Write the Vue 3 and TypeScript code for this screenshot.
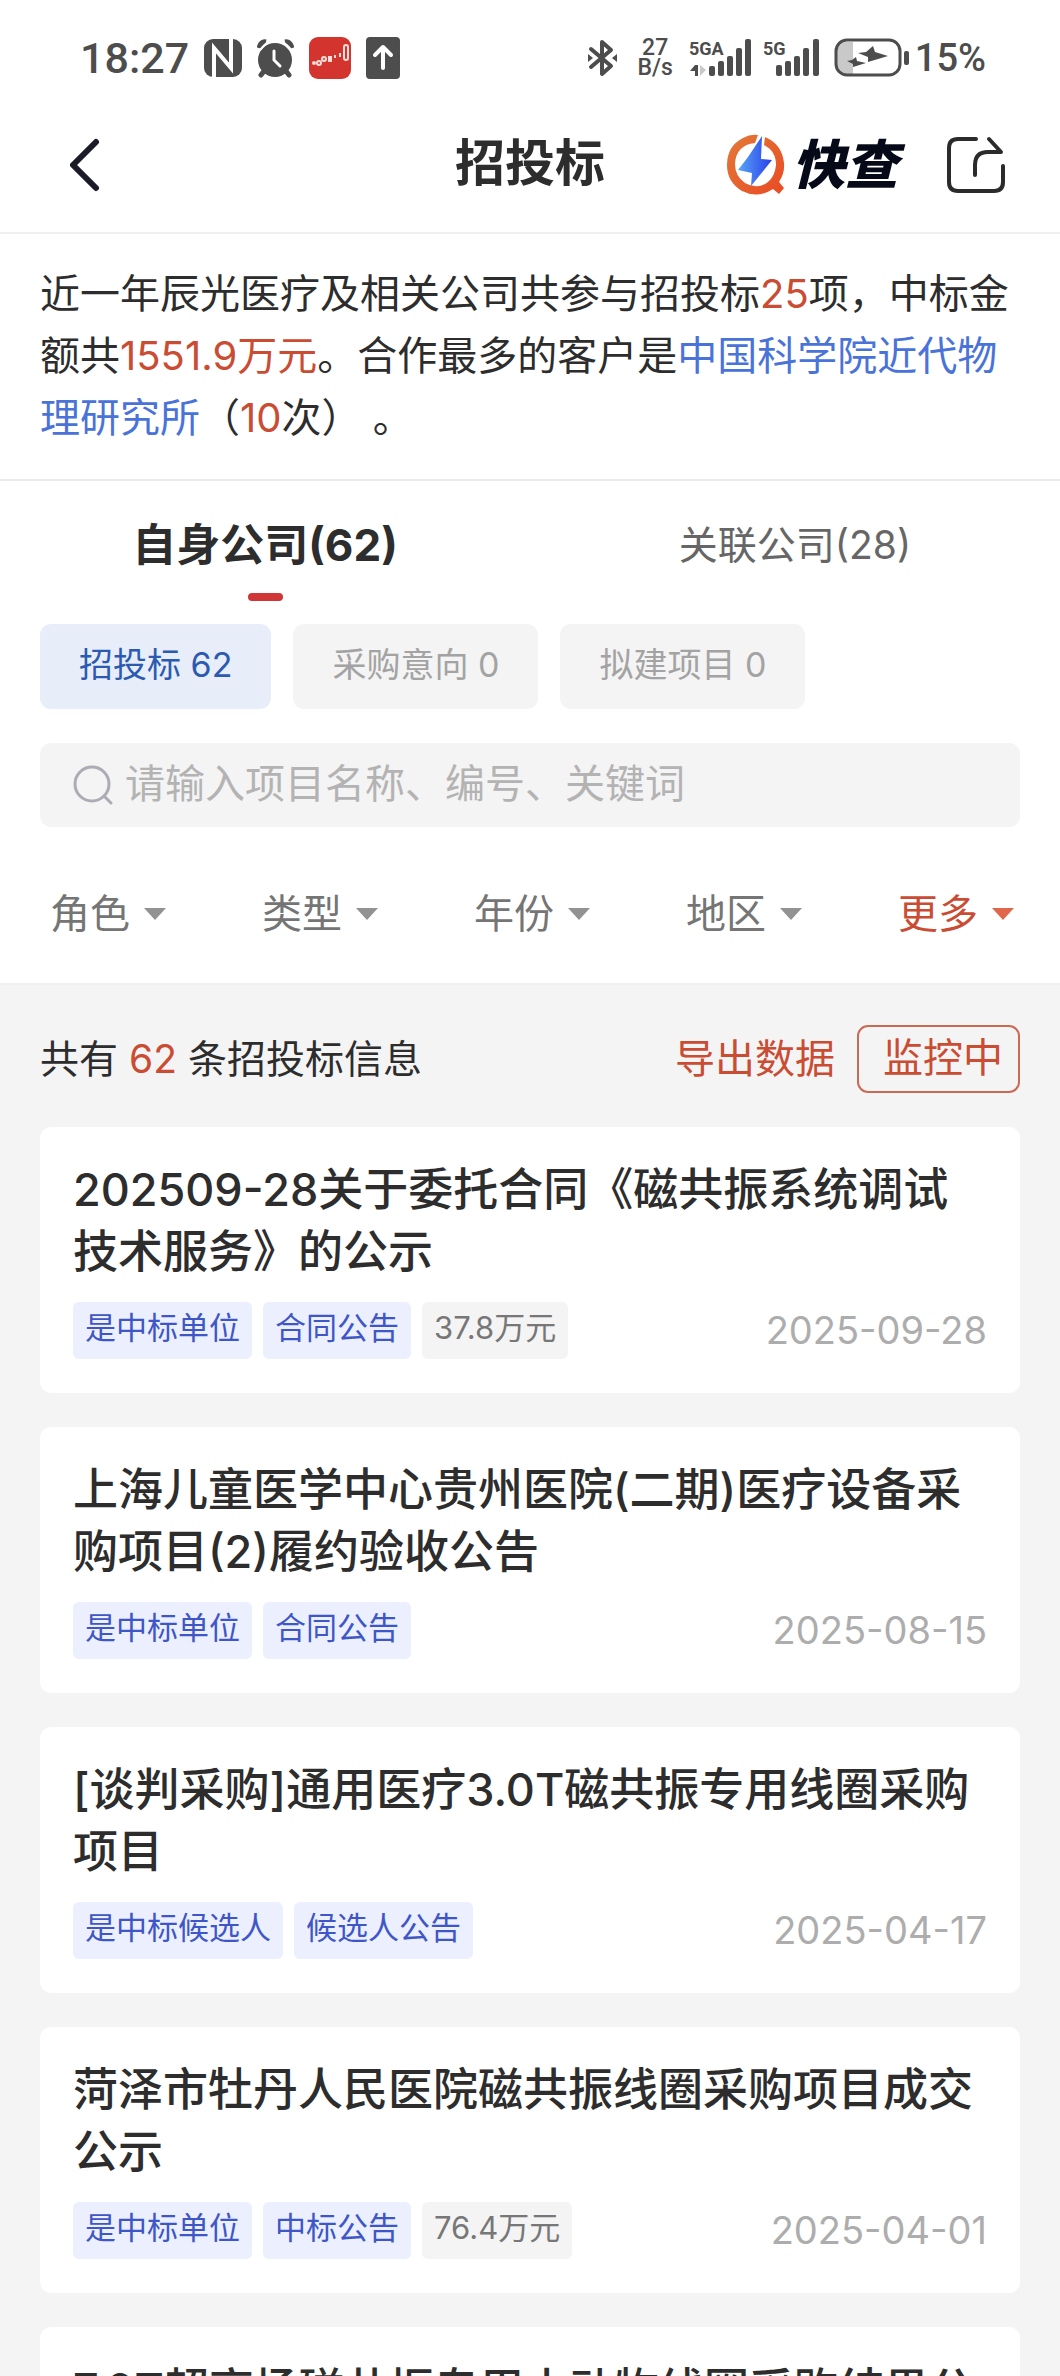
<script setup lang="ts">
import { ref } from 'vue'

interface Tag {
  text: string
  plain?: boolean
}
interface Bid {
  title: string
  tags: Tag[]
  date: string
}

const tabs = ['自身公司(62)', '关联公司(28)']
const activeTab = ref(0)

const chips = ['招投标 62', '采购意向 0', '拟建项目 0']
const activeChip = ref(0)

const keyword = ref('')
const filters = ['角色', '类型', '年份', '地区', '更多']

const bids: Bid[] = [
  {
    title: '202509-28关于委托合同《磁共振系统调试\n技术服务》的公示',
    tags: [{ text: '是中标单位' }, { text: '合同公告' }, { text: '37.8万元', plain: true }],
    date: '2025-09-28',
  },
  {
    title: '上海儿童医学中心贵州医院(二期)医疗设备采\n购项目(2)履约验收公告',
    tags: [{ text: '是中标单位' }, { text: '合同公告' }],
    date: '2025-08-15',
  },
  {
    title: '[谈判采购]通用医疗3.0T磁共振专用线圈采购\n项目',
    tags: [{ text: '是中标候选人' }, { text: '候选人公告' }],
    date: '2025-04-17',
  },
  {
    title: '菏泽市牡丹人民医院磁共振线圈采购项目成交\n公示',
    tags: [{ text: '是中标单位' }, { text: '中标公告' }, { text: '76.4万元', plain: true }],
    date: '2025-04-01',
  },
  {
    title: '7.0T超高场磁共振专用小动物线圈采购结果公',
    tags: [],
    date: '',
  },
]
</script>

<template>
  <div class="app">
    <div class="status">
      <div class="status-left">
        <span class="clock">18:27</span>
        <svg width="38" height="40" viewBox="0 0 38 40">
          <rect x="0" y="1" width="38" height="38" rx="9" fill="#4d4d4d" />
          <path d="M10 40V10l17 20V0" fill="none" stroke="#fff" stroke-width="4" />
        </svg>
        <svg width="37" height="40" viewBox="0 0 37 40">
          <circle cx="18" cy="22" r="17" fill="#4d4d4d" />
          <path d="M2 10Q4 3 9 4M28 4q5-1 7 6" fill="none" stroke="#4d4d4d" stroke-width="5" />
          <path d="M3 12Q8 6 12 4M25 4q5 2 9 8" fill="none" stroke="#fff" stroke-width="2" />
          <path d="M7 33l-3 4M29 33l3 4" stroke="#4d4d4d" stroke-width="5" stroke-linecap="round" />
          <path d="M17 13v9l6 6" fill="none" stroke="#fff" stroke-width="3" stroke-linecap="round" />
        </svg>
        <svg width="42" height="42" viewBox="0 0 42 42">
          <rect width="42" height="42" rx="9" fill="#d4342e" />
          <g fill="none" stroke="#fbdcd8" stroke-width="2">
            <circle cx="5" cy="26" r="1" />
            <circle cx="10" cy="26" r="2" />
            <circle cx="15" cy="22" r="2" />
            <path d="M20 20h2v4h-2zM26 18v3M31 16v4" />
            <rect x="35" y="8" width="4" height="15" rx="2" />
          </g>
        </svg>
        <svg width="34" height="42" viewBox="0 0 34 42">
          <rect width="34" height="42" rx="4" fill="#4d4d4d" />
          <path d="M17 31V11M9 18l8-8 8 8" fill="none" stroke="#fff" stroke-width="4" stroke-linecap="round" stroke-linejoin="round" />
        </svg>
      </div>
      <div class="status-right">
        <svg width="29" height="40" viewBox="0 0 29 40">
          <path d="M3 11l20 17-9 8V4l9 8L3 29" fill="none" stroke="#4d4d4d" stroke-width="4" stroke-linejoin="round" stroke-linecap="round" />
          <path d="M0 16l5 4-5 4zM29 16l-5 4 5 4z" fill="#4d4d4d" />
        </svg>
        <span class="speed"><span>27</span><span>B/s</span></span>
        <svg class="signal-a" width="63" height="40" viewBox="0 0 63 40">
          <text x="0" y="17" class="net">5GA</text>
          <path d="M1 33l5-6h3v11H6v-5z" fill="#4d4d4d" />
          <path d="M11 27l6 5-6 6z" fill="#c9c9c9" />
          <g fill="#4d4d4d">
            <rect x="20" y="28" width="6" height="10" rx="2" />
            <rect x="29" y="23" width="6" height="15" rx="2" />
            <rect x="38" y="18" width="6" height="20" rx="2" />
            <rect x="47" y="10" width="6" height="28" rx="2" />
            <rect x="56" y="1" width="6" height="37" rx="2" />
          </g>
        </svg>
        <svg class="signal-b" width="56" height="40" viewBox="0 0 56 40">
          <text x="0" y="17" class="net">5G</text>
          <g fill="#4d4d4d">
            <rect x="13" y="27" width="6" height="11" rx="2" />
            <rect x="22" y="23" width="6" height="15" rx="2" />
            <rect x="31" y="18" width="6" height="20" rx="2" />
            <rect x="40" y="10" width="6" height="28" rx="2" />
            <rect x="50" y="1" width="6" height="37" rx="2" />
          </g>
        </svg>
        <svg class="battery" width="76" height="40" viewBox="0 0 76 40">
          <path d="M12 4h7v32h-7q-9 0-9-9V13q0-9 9-9z" fill="#c9c9c9" />
          <rect x="2" y="2" width="64" height="35" rx="11" fill="none" stroke="#4d4d4d" stroke-width="3" />
          <rect x="70" y="13" width="5" height="14" rx="2" fill="#4d4d4d" />
          <path d="M39 8l2 6 13 4-20 6v-5l-10-4 8-1zM22 19l1 4 9 2-13 4v-3l-6-3 5-1z" fill="#4d4d4d" />
        </svg>
        <span class="percent">15%</span>
      </div>
    </div>

    <header class="header">
      <button class="icon-btn back" aria-label="返回">
        <svg width="30" height="54" viewBox="0 0 30 54">
          <path d="M26 4L3 27l23 23" fill="none" stroke="#1b1b27" stroke-width="6" stroke-linecap="round" stroke-linejoin="round" />
        </svg>
      </button>
      <h1>招投标</h1>
      <div class="header-right">
        <a class="brand" href="#">
          <svg width="60" height="62" viewBox="0 0 60 62">
            <defs>
              <linearGradient id="ring" x1="0" y1="0" x2="1" y2="1">
                <stop offset="0" stop-color="#e27a38" />
                <stop offset="1" stop-color="#e94a24" />
              </linearGradient>
              <linearGradient id="bolt" x1="0" y1="0" x2="1" y2="0">
                <stop offset="0" stop-color="#58a6f8" />
                <stop offset="1" stop-color="#2a3ee8" />
              </linearGradient>
            </defs>
            <path d="M32 1Q24 0 17 4 1 12 1 31 1 48 16 57 32 65 47 55L53 60 58 54 53 48Q59 39 58 29 56 10 39 3L38 11Q50 17 50 31 49 42 42 48 31 56 19 49 9 42 9 30 10 11 29 9z" fill="url(#ring)" />
            <path d="M36 2L22 23 12 36l14 3-1 13 21-26-11-1z" fill="url(#bolt)" />
          </svg>
          <span>快查</span>
        </a>
        <button class="icon-btn" aria-label="分享">
          <svg width="60" height="58" viewBox="0 0 60 58">
            <g fill="none" stroke="#2b2b2b" stroke-width="4" stroke-linecap="round" stroke-linejoin="round">
              <path d="M30 3H12Q3 3 3 12v34q0 9 9 9h36q9 0 9-9V30" />
              <path d="M29 39V29q0-13 13-13h13L43 3" />
            </g>
          </svg>
        </button>
      </div>
    </header>

    <p class="summary">近一年辰光医疗及相关公司共参与招投标<em>25</em>项，中标金额共<em>1551.9万元</em>。合作最多的客户是<a href="#">中国科学院近代物理研究所</a>（<em>10</em>次） 。</p>

    <div class="tabs" role="tablist">
      <button
        v-for="(tab, i) in tabs"
        :key="tab"
        class="tab"
        :class="{ active: activeTab === i }"
        role="tab"
        :aria-selected="activeTab === i"
        @click="activeTab = i"
      >
        {{ tab }}
      </button>
    </div>

    <div class="chips">
      <button
        v-for="(chip, i) in chips"
        :key="chip"
        class="chip"
        :class="{ active: activeChip === i }"
        @click="activeChip = i"
      >
        {{ chip }}
      </button>
    </div>

    <label class="search">
      <svg width="40" height="40" viewBox="0 0 40 40">
        <circle cx="19" cy="19" r="17" fill="none" stroke="#acacb6" stroke-width="3" />
        <path d="M31 31l7 7" stroke="#acacb6" stroke-width="3" stroke-linecap="round" />
      </svg>
      <input v-model="keyword" type="text" placeholder="请输入项目名称、编号、关键词" aria-label="搜索" />
    </label>

    <div class="filters">
      <label v-for="(f, i) in filters" :key="f" class="filter" :class="{ accent: i === 4 }">
        <select :aria-label="f">
          <option>{{ f }}</option>
        </select>
        <svg width="22" height="12" viewBox="0 0 22 12"><path d="M0 0h22L11 12z" fill="currentColor" /></svg>
      </label>
    </div>

    <main class="results">
      <div class="bar">
        <span class="count">共有 <em>62</em> 条招投标信息</span>
        <button class="export">导出数据</button>
        <button class="monitor">监控中</button>
      </div>
      <article v-for="bid in bids" :key="bid.title" class="card">
        <h2>{{ bid.title }}</h2>
        <div class="meta">
          <span v-for="tag in bid.tags" :key="tag.text" class="tag" :class="{ plain: tag.plain }">{{ tag.text }}</span>
          <time>{{ bid.date }}</time>
        </div>
      </article>
    </main>
  </div>
</template>

<style>
body {
  margin: 0;
  background: #f4f4f4;
}
</style>

<style scoped>
.app {
  display: flex;
  flex-direction: column;
  height: 100vh;
  overflow: hidden;
  background: #fff;
  color: #2d2d2d;
  font-family: Inter, "Noto Sans CJK SC", sans-serif;
  font-size: 40px;
  line-height: 62px;
}
button,
input,
select {
  margin: 0;
  padding: 0;
  border: 0;
  background: none;
  color: inherit;
  font: inherit;
}
svg {
  display: block;
  flex: none;
}
em {
  color: #c94c33;
  font-style: normal;
}
a {
  color: #4a73d9;
  text-decoration: none;
}

.status {
  display: flex;
  flex: none;
  justify-content: space-between;
  align-items: center;
  height: 80px;
  padding: 18px 74px 0 80px;
  color: #4d4d4d;
  font-family: Roboto, sans-serif;
}
.status-left,
.status-right {
  display: flex;
  align-items: center;
}
.status-left {
  gap: 15px;
}
.clock {
  font-size: 43px;
  font-weight: 500;
}
.speed {
  display: flex;
  flex-direction: column;
  margin: 0 16px 0 20px;
  font-size: 23px;
  font-weight: 500;
  line-height: 20px;
  text-align: center;
}
.net {
  fill: #4d4d4d;
  font-size: 18px;
  font-weight: 700;
}
.signal-a {
  margin-right: 11px;
}
.signal-b {
  margin-right: 15px;
}
.battery {
  margin-right: 5px;
}
.percent {
  font-size: 38px;
  font-weight: 500;
}

.header {
  display: grid;
  flex: none;
  grid-template-columns: 1fr auto 1fr;
  align-items: center;
  height: 136px;
  box-sizing: border-box;
  padding: 0 54px;
  border-bottom: 2px solid #f0f0f0;
}
.back {
  justify-self: start;
  padding-left: 16px;
}
h1 {
  margin: 0;
  padding-bottom: 4px;
  font-size: 50px;
  font-weight: 700;
}
.header-right {
  display: flex;
  justify-content: flex-end;
  align-items: center;
  gap: 48px;
}
.brand {
  display: flex;
  align-items: center;
  gap: 6px;
  color: #060a18;
  font-size: 53px;
  font-style: italic;
  font-weight: 900;
}

.summary {
  flex: none;
  margin: 0;
  padding: 29px 40px 30px;
  border-bottom: 2px solid #ebebeb;
}

.tabs {
  display: flex;
  flex: none;
  height: 126px;
}
.tab {
  display: flex;
  flex: 1;
  flex-direction: column;
  align-items: center;
  padding-top: 33px;
  color: #666;
  font-size: 39px;
}
.tab.active {
  color: #2d2d2d;
  font-size: 44px;
  font-weight: 700;
}
.tab.active::after {
  content: "";
  width: 35px;
  height: 8px;
  margin-top: 17px;
  border-radius: 4px;
  background: #d03636;
}

.chips {
  display: flex;
  flex: none;
  gap: 22px;
  margin: 17px 40px 0;
}
.chip {
  height: 85px;
  padding: 0 39px 4px;
  border-radius: 11px;
  background: #f4f4f4;
  color: #a3a3a3;
  font-size: 34px;
}
.chip.active {
  background: #e7eefa;
  color: #2c5ab0;
}

.search {
  display: flex;
  flex: none;
  align-items: center;
  gap: 12px;
  height: 84px;
  margin: 34px 40px 0;
  padding: 0 33px;
  border-radius: 11px;
  background: #f4f4f4;
}
.search input {
  flex: 1;
  min-width: 0;
  padding-bottom: 2px;
  outline: 0;
}
.search input::placeholder {
  color: #b3b3b3;
  opacity: 1;
}

.filters {
  display: flex;
  flex: none;
  padding: 56px 0 38px;
  border-bottom: 2px solid #f0f0f0;
}
.filter {
  display: flex;
  flex: 1;
  justify-content: center;
  align-items: center;
  gap: 14px;
  padding-left: 4px;
  color: #929292;
}
.filter select {
  appearance: none;
  height: 62px;
  color: #757575;
}
.filter.accent {
  color: #e0674b;
}
.filter.accent select {
  color: #c94c33;
}

.results {
  display: flex;
  flex: 1;
  flex-direction: column;
  gap: 34px;
  min-height: 0;
  padding: 40px 40px 0;
  overflow: hidden;
  background: #f4f4f4;
}
.bar {
  display: flex;
  flex: none;
  align-items: center;
  height: 68px;
}
.count {
  flex: 1;
  font-size: 39px;
}
.export,
.monitor {
  color: #c94c33;
}
.export {
  margin-right: 22px;
}
.monitor {
  height: 68px;
  padding: 0 15px 4px 24px;
  border: 2px solid #c96a55;
  border-radius: 11px;
}

.card {
  flex: none;
  padding: 32px 33px 34px;
  border-radius: 11px;
  background: #fff;
}
h2 {
  margin: 0 0 19px;
  font-size: 45px;
  font-weight: 500;
  white-space: pre-line;
}
.meta {
  display: flex;
  align-items: center;
  gap: 11px;
}
.tag {
  padding: 0 12px 5px;
  border-radius: 6px;
  background: #ebeffe;
  color: #3e56c6;
  font-size: 31px;
  line-height: 52px;
}
.tag.plain {
  background: #f4f4f4;
  color: #777;
}
time {
  margin-left: auto;
  color: #adadad;
  font-size: 38px;
  line-height: 57px;
}
</style>
